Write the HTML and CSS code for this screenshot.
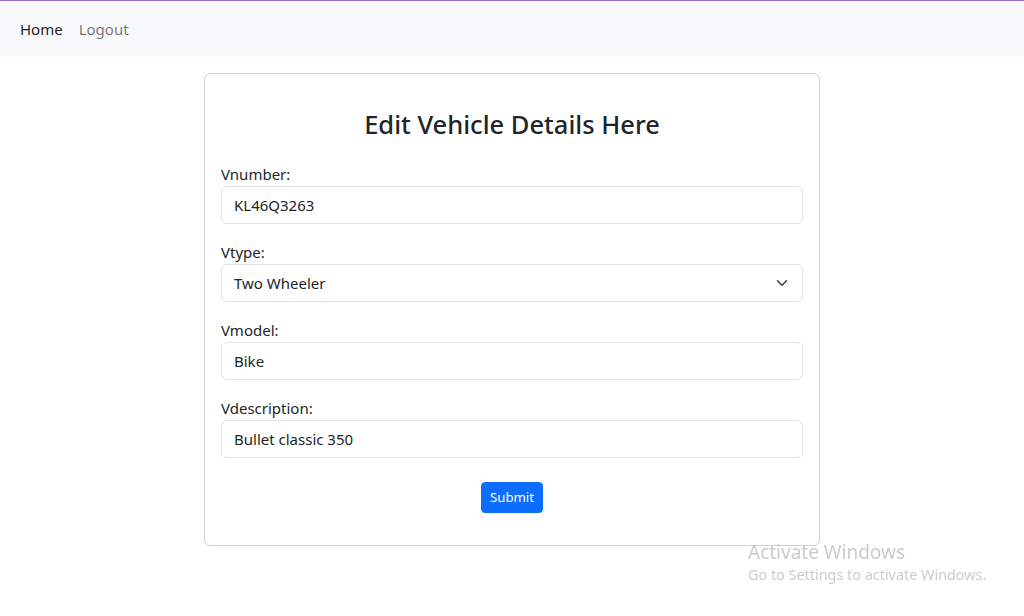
FILE: index.html
```html
<!DOCTYPE html>
<html lang="en">
<head>
<meta charset="utf-8">
<title>Edit Vehicle</title>
<link rel="stylesheet" href="styles.css">
</head>
<body>
<nav class="navbar">
  <ul class="nav">
    <li><a class="nav-link active" href="#">Home</a></li>
    <li><a class="nav-link" href="#">Logout</a></li>
  </ul>
</nav>
<main class="page">
  <div class="card">
    <h2 class="title">Edit Vehicle Details Here</h2>
    <form class="form">
      <div class="group">
        <label class="label" for="vnumber">Vnumber:</label>
        <input class="control" id="vnumber" type="text" value="KL46Q3263">
      </div>
      <div class="group">
        <label class="label" for="vtype">Vtype:</label>
        <div class="select">
          <span class="select-value">Two Wheeler</span>
          <svg class="chevron" width="16" height="12" viewBox="0 0 16 16"><path d="m2 5 6 6 6-6" fill="none" stroke="#343a40" stroke-width="2" stroke-linecap="round" stroke-linejoin="round"/></svg>
        </div>
      </div>
      <div class="group">
        <label class="label" for="vmodel">Vmodel:</label>
        <input class="control" id="vmodel" type="text" value="Bike">
      </div>
      <div class="group">
        <label class="label" for="vdesc">Vdescription:</label>
        <input class="control" id="vdesc" type="text" value="Bullet classic 350">
      </div>
      <div class="actions">
        <button class="btn" type="button">Submit</button>
      </div>
    </form>
  </div>
</main>
<div class="watermark">
  <div class="wm-title">Activate Windows</div>
  <div class="wm-sub">Go to Settings to activate Windows.</div>
</div>
</body>
</html>
```

FILE: styles.css
```css
* { box-sizing: border-box; }
html, body { margin: 0; padding: 0; }
body {
  font-family: "Noto Sans", "Open Sans", sans-serif;
  font-size: 15px;
  line-height: 24px;
  color: #212529;
  background: #fff;
  height: 616px;
  overflow: hidden;
}
.navbar {
  background: #f8f9fa;
  border-top: 1px solid #9b6fc8;
  padding: 8px 12px;
  height: 57px;
}
.nav {
  list-style: none;
  margin: 0;
  padding: 0;
  display: flex;
}
.nav-link {
  display: block;
  padding: 8px 8px;
  color: rgba(0,0,0,0.55);
  text-decoration: none;
  line-height: 24px;
}
.nav-link.active { color: rgba(0,0,0,0.9); }
.page {
  display: flex;
  justify-content: center;
  padding-top: 16px;
}
.card {
  width: 616px;
  border: 1px solid rgba(0,0,0,0.175);
  border-radius: 6px;
  padding: 16px 16px 16px;
}
.title {
  margin: 16px 0 20px;
  text-align: center;
  font-size: 25.5px;
  font-weight: 500;
  line-height: 36px;
}
.form { display: flex; flex-direction: column; gap: 16px; }
.group { display: flex; flex-direction: column; }
.label { line-height: 24px; }
.control, .select {
  display: block;
  width: 100%;
  height: 38px;
  padding: 6px 12px;
  font: inherit;
  color: #212529;
  background: #fff;
  border: 1px solid #dee2e6;
  border-radius: 6px;
  line-height: 24px;
}
.select {
  display: flex;
  align-items: center;
  justify-content: space-between;
  padding-right: 12px;
}
.chevron { flex: none; }
.actions {
  display: flex;
  justify-content: center;
  margin-top: 8px;
  margin-bottom: 16px;
}
.btn {
  font: inherit;
  font-size: 13.2px;
  line-height: 21px;
  padding: 4px 8px;
  color: #fff;
  background: #0d6efd;
  border: 1px solid #0d6efd;
  border-radius: 4px;
}
.watermark {
  position: fixed;
  left: 748px;
  top: 540px;
  color: rgba(160,160,160,0.55);
  font-family: "Noto Sans", sans-serif;
}
.wm-title { font-size: 19px; line-height: 24px; }
.wm-sub { font-size: 14.4px; line-height: 20px; margin-top: 1px; }
```
